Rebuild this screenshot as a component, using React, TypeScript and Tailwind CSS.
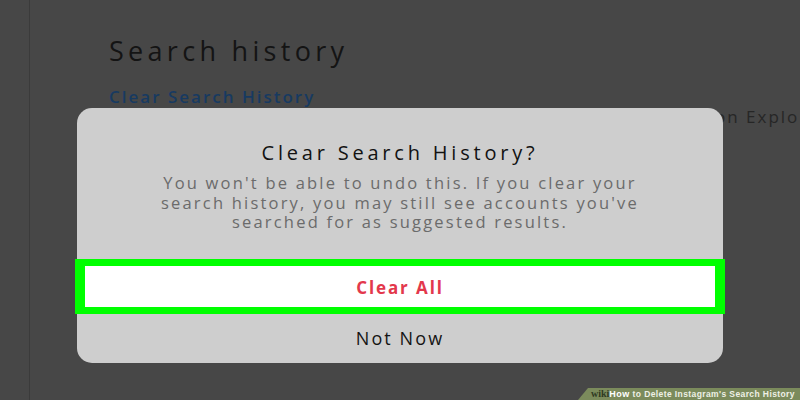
import React from 'react';

const font = "font-['Open_Sans','Noto_Sans',sans-serif]";

const WikiBanner: React.FC = () => (
  <div className="absolute bottom-0 right-0 flex h-[12px] w-[222px] items-center bg-[#7b8b5c] pl-[13px] [clip-path:polygon(10px_0,100%_0,100%_100%,0_100%)]">
    <span className="font-['Liberation_Serif',serif] text-[10px] font-bold leading-none text-[#2f3a22]">wiki</span>
    <span className="font-['Liberation_Sans',sans-serif] text-[9px] font-bold leading-none tracking-[0.4px] text-white">How</span>
    <span className="ml-[3px] whitespace-nowrap font-['Liberation_Sans',sans-serif] text-[8.5px] font-bold leading-none tracking-[0.4px] text-[#eef0e6]">
      to Delete Instagram's Search History
    </span>
  </div>
);

const App: React.FC = () => {
  return (
    <div className={`relative h-[400px] w-[800px] overflow-hidden bg-[#474747] ${font}`}>
      {/* background page, dimmed */}
      <div className="ml-[29px] flex h-full flex-col border-l border-[#3b3b3b] pl-[79px] pt-[32px]">
        <h1 className="text-[27px] leading-[38px] tracking-[4.3px] text-[#141414]">Search history</h1>
        <a className="mt-[16px] text-[17px] font-semibold leading-[22px] tracking-[2px] text-[#173a61]">Clear Search History</a>
        <p className="mt-[-2px] whitespace-nowrap pl-[606px] text-[17px] leading-[22px] tracking-[2px] text-[#262626]">on Explore</p>
      </div>

      {/* dialog */}
      <div className="absolute left-[77px] top-[108px] flex h-[255px] w-[646px] flex-col rounded-[15px] bg-[#cecece]">
        <h2 className="pt-[33px] text-center text-[20px] font-medium leading-[24px] tracking-[3.8px] text-[#121212]">
          Clear Search History?
        </h2>
        <p className="mt-[8px] text-center text-[16.5px] leading-[19.5px] tracking-[2.2px] text-[#6b6b6b]">
          You won't be able to undo this. If you clear your
          <br />
          search history, you may still see accounts you've
          <br />
          searched for as suggested results.
        </p>
        <div className="-mx-[2px] mt-[27px] flex h-[55px] items-center justify-center border-x-[10px] border-y-[7px] border-[#00ff00] bg-white">
          <span className="pt-[3px] text-[17px] font-bold tracking-[1.9px] text-[#e3384c]">Clear All</span>
        </div>
        <div className="flex flex-1 items-center justify-center">
          <span className="text-[18px] tracking-[2.1px] text-[#141414]">Not Now</span>
        </div>
      </div>

      <WikiBanner />
    </div>
  );
};

export default App;
